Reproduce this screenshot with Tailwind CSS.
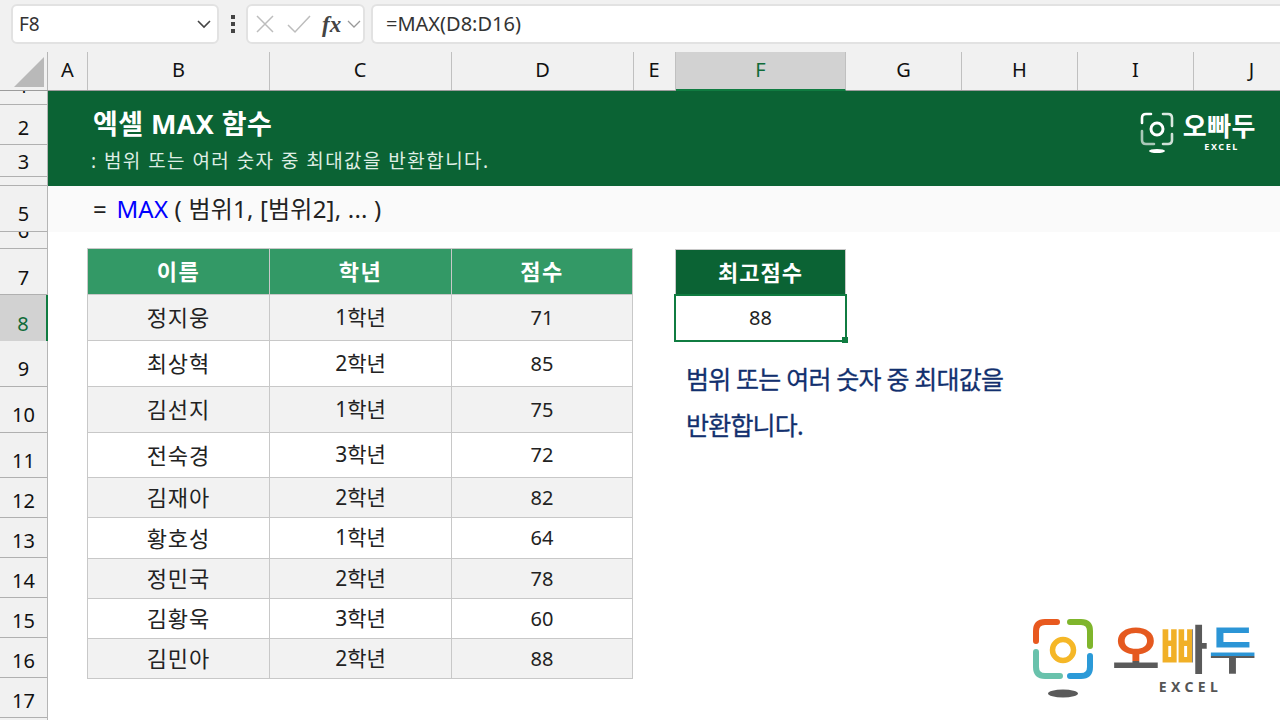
<!DOCTYPE html>
<html lang="ko">
<head>
  <meta charset="UTF-8" />
  <title>엑셀 MAX 함수</title>
  <script src="https://cdn.jsdelivr.net/npm/@tailwindcss/browser@4"></script>
</head>
<body class="bg-white overflow-hidden font-['Noto_Sans','Noto_Sans_CJK_KR',sans-serif]">
<div class="relative w-[1280px] h-[720px] overflow-hidden flex flex-col">

  <!-- Formula bar -->
  <div class="h-[52px] shrink-0 bg-[#f1f1f1] flex items-start pt-[4px] pl-[11px]">
    <div class="w-[208px] h-[40px] shrink-0 bg-white border-2 border-[#e2e2e2] rounded-[6px] flex items-center justify-between pl-[6px] pr-[5px] text-[19px] text-[#333]">
      <span>F8</span>
      <svg width="16" height="10" viewBox="0 0 16 10" fill="none" stroke="#444" stroke-width="1.6"><path d="M2 2l6 6 6-6"/></svg>
    </div>
    <div class="w-[27px] h-[40px] shrink-0 flex flex-col items-center justify-center gap-[3px]">
      <i class="block w-[4px] h-[4px] bg-[#444]"></i>
      <i class="block w-[4px] h-[4px] bg-[#444]"></i>
      <i class="block w-[4px] h-[4px] bg-[#444]"></i>
    </div>
    <div class="w-[119px] h-[40px] bg-white border-2 border-[#e2e2e2] rounded-[6px] flex items-center pl-[7px] shrink-0">
      <svg width="20" height="20" viewBox="0 0 20 20" fill="none" stroke="#bdbdbd" stroke-width="1.5"><path d="M2 2l16 16M18 2L2 18"/></svg>
      <svg class="ml-[12px]" width="24" height="20" viewBox="0 0 24 20" fill="none" stroke="#bdbdbd" stroke-width="1.5"><path d="M1 11l7 7L23 2"/></svg>
      <span class="ml-[11px] text-[23px] leading-none font-bold italic text-[#444] font-['Liberation_Serif',serif]">fx</span>
      <svg class="ml-[6px]" width="14" height="8" viewBox="0 0 14 8" fill="none" stroke="#999" stroke-width="1.3"><path d="M1 1l6 6 6-6"/></svg>
    </div>
    <div class="ml-[6px] flex-1 h-[40px] bg-white border-2 border-r-0 border-[#e2e2e2] rounded-l-[6px] flex items-center pl-[13px] text-[20px] text-[#333]">=MAX(D8:D16)</div>
  </div>

  <!-- Column headers -->
  <div class="h-[39px] shrink-0 bg-[#f1f1f1] flex text-[20px] text-[#111] border-b border-[#9c9c9c]">
    <div class="w-[48px] shrink-0 border-r border-[#b5b5b5] flex items-start pt-[5px] pl-[14px]">
      <svg width="30" height="30" viewBox="0 0 30 30"><path d="M30 0V30H0z" fill="#b9b9b9"/></svg>
    </div>
    <div class="w-[40px] shrink-0 border-r border-[#c0c0c0] flex items-center justify-center pb-[2px]">A</div>
    <div class="w-[182px] shrink-0 border-r border-[#c0c0c0] flex items-center justify-center pb-[2px]">B</div>
    <div class="w-[182px] shrink-0 border-r border-[#c0c0c0] flex items-center justify-center pb-[2px] pr-[1px]">C</div>
    <div class="w-[182px] shrink-0 border-r border-[#c0c0c0] flex items-center justify-center pb-[2px]">D</div>
    <div class="w-[42px] shrink-0 border-r border-[#c0c0c0] flex items-center justify-center pb-[2px] pr-[1px]">E</div>
    <div class="w-[170px] shrink-0 bg-[#d2d2d2] border-b-2 border-[#107c41] -mb-px border-r border-r-[#c0c0c0] flex items-center justify-center pb-[1px] text-[#0f6b38]">F</div>
    <div class="w-[116px] shrink-0 border-r border-[#c0c0c0] flex items-center justify-center pb-[2px]">G</div>
    <div class="w-[116px] shrink-0 border-r border-[#c0c0c0] flex items-center justify-center pb-[2px]">H</div>
    <div class="w-[116px] shrink-0 border-r border-[#c0c0c0] flex items-center justify-center pb-[2px]">I</div>
    <div class="w-[116px] shrink-0 border-r border-[#c0c0c0] flex items-center justify-center pb-[2px]">J</div>
  </div>

  <div class="flex flex-1 min-h-0">
    <!-- Row headers -->
    <div class="w-[48px] shrink-0 bg-[#f1f1f1] border-r border-[#b5b5b5] text-[20px] leading-[24px] text-[#111] flex flex-col">
      <div class="h-[14px] shrink-0 overflow-hidden border-b border-[#b0b0b0] flex items-end justify-center pb-[6px]"><span class="leading-[24px]">1</span></div>
      <div class="h-[40px] shrink-0 overflow-hidden border-b border-[#b0b0b0] flex items-end justify-center pb-[4px]">2</div>
      <div class="h-[32px] shrink-0 overflow-hidden border-b border-[#b0b0b0] flex items-end justify-center pb-[2px]">3</div>
      <div class="h-[9px] shrink-0 overflow-hidden border-b border-[#b0b0b0]"></div>
      <div class="h-[46px] shrink-0 overflow-hidden border-b border-[#b0b0b0] flex items-end justify-center pb-[5px]">5</div>
      <div class="h-[17px] shrink-0 overflow-hidden border-b border-[#b0b0b0] flex items-end justify-center pb-[5px]"><span class="leading-[24px]">6</span></div>
      <div class="h-[46px] shrink-0 overflow-hidden border-b border-[#b0b0b0] flex items-end justify-center pb-[4px]">7</div>
      <div class="h-[46px] shrink-0 overflow-hidden bg-[#d2d2d2] border-r-2 -mr-px border-[#107c41] flex items-end justify-center pb-[5px] text-[#0f6b38]">8</div>
      <div class="h-[46px] shrink-0 overflow-hidden border-b border-[#b0b0b0] flex items-end justify-center pb-[5px]">9</div>
      <div class="h-[46px] shrink-0 overflow-hidden border-b border-[#b0b0b0] flex items-end justify-center pb-[5px]">10</div>
      <div class="h-[45px] shrink-0 overflow-hidden border-b border-[#b0b0b0] flex items-end justify-center pb-[4px]">11</div>
      <div class="h-[40px] shrink-0 overflow-hidden border-b border-[#b0b0b0] flex items-end justify-center pb-[4px]">12</div>
      <div class="h-[40px] shrink-0 overflow-hidden border-b border-[#b0b0b0] flex items-end justify-center pb-[4px]">13</div>
      <div class="h-[40px] shrink-0 overflow-hidden border-b border-[#b0b0b0] flex items-end justify-center pb-[4px]">14</div>
      <div class="h-[40px] shrink-0 overflow-hidden border-b border-[#b0b0b0] flex items-end justify-center pb-[4px]">15</div>
      <div class="h-[40px] shrink-0 overflow-hidden border-b border-[#b0b0b0] flex items-end justify-center pb-[4px]">16</div>
      <div class="h-[40px] shrink-0 overflow-hidden border-b border-[#b0b0b0] flex items-end justify-center pb-[4px]">17</div>
    </div>

    <!-- Sheet -->
    <div class="flex-1 min-w-0 flex flex-col">
      <!-- Banner -->
      <div class="h-[95px] shrink-0 bg-[#0b6334] flex justify-between pl-[45px] pr-[24px]">
        <div class="text-white">
          <div class="mt-[15px] text-[27px] leading-[36px] font-bold tracking-[0.4px]">엑셀 MAX 함수</div>
          <div class="-ml-[2px] mt-[6px] text-[19px] leading-[26px] text-[#dfeee4] tracking-[1.45px]">: 범위 또는 여러 숫자 중 최대값을 반환합니다.</div>
        </div>
        <div class="flex gap-[9px] pt-[21px]">
          <svg width="34" height="44" viewBox="0 0 34 44" fill="none" stroke="#fff" stroke-width="2.6" stroke-linecap="round">
            <path d="M2 11V6q0-4 4-4h5"/>
            <path d="M23 2h5q4 0 4 4v8" opacity=".85"/>
            <path d="M2 19v9q0 4 4 4h8" opacity=".65"/>
            <path d="M32 22v6q0 4-4 4h-5" opacity=".8"/>
            <circle cx="17" cy="17" r="6" stroke-width="3"/>
            <ellipse cx="17" cy="39" rx="8" ry="2" fill="#fff" stroke="none"/>
          </svg>
          <div class="flex flex-col items-center">
            <span class="text-[26px] leading-[28px] font-bold tracking-[0.5px] text-white">오빠두</span>
            <span class="self-end mr-[17px] mt-[2px] text-[9px] leading-[10px] font-bold tracking-[1.6px] text-white">EXCEL</span>
          </div>
        </div>
      </div>

      <!-- Syntax row -->
      <div class="h-[46px] shrink-0 bg-[#fafafa] pl-[45px] flex items-center text-[24px] tracking-[0.2px] text-[#222] whitespace-pre">= <span class="ml-[3px] text-[#0000ff]">MAX</span> ( 범위1, [범위2], ... )</div>

      <div class="flex pt-[16px] pl-[39px]">
        <!-- Data table -->
        <table class="w-[546px] table-fixed border-collapse text-[20px] text-center text-[#222] shrink-0">
          <thead>
            <tr class="h-[46px] bg-[#339966] text-white text-[22px] tracking-[1.5px]">
              <th class="w-[182px] border border-[#c8c8c8] font-semibold">이름</th><th class="w-[182px] border border-[#c8c8c8] font-semibold">학년</th><th class="border border-[#c8c8c8] font-semibold">점수</th>
            </tr>
          </thead>
          <tbody>
            <tr class="h-[46px] bg-[#f2f2f2]"><td class="border border-[#c8c8c8] text-[22px] tracking-[1px]">정지웅</td><td class="border border-[#c8c8c8] text-[21px]">1학년</td><td class="border border-[#c8c8c8]">71</td></tr>
            <tr class="h-[46px]"><td class="border border-[#c8c8c8] text-[22px] tracking-[1px]">최상혁</td><td class="border border-[#c8c8c8] text-[21px]">2학년</td><td class="border border-[#c8c8c8]">85</td></tr>
            <tr class="h-[46px] bg-[#f2f2f2]"><td class="border border-[#c8c8c8] text-[22px] tracking-[1px]">김선지</td><td class="border border-[#c8c8c8] text-[21px]">1학년</td><td class="border border-[#c8c8c8]">75</td></tr>
            <tr class="h-[45px]"><td class="border border-[#c8c8c8] text-[22px] tracking-[1px]">전숙경</td><td class="border border-[#c8c8c8] text-[21px]">3학년</td><td class="border border-[#c8c8c8]">72</td></tr>
            <tr class="h-[40px] bg-[#f2f2f2]"><td class="border border-[#c8c8c8] text-[22px] tracking-[1px]">김재아</td><td class="border border-[#c8c8c8] text-[21px]">2학년</td><td class="border border-[#c8c8c8]">82</td></tr>
            <tr class="h-[41px]"><td class="border border-[#c8c8c8] text-[22px] tracking-[1px]">황호성</td><td class="border border-[#c8c8c8] text-[21px]">1학년</td><td class="border border-[#c8c8c8]">64</td></tr>
            <tr class="h-[40px] bg-[#f2f2f2]"><td class="border border-[#c8c8c8] text-[22px] tracking-[1px]">정민국</td><td class="border border-[#c8c8c8] text-[21px]">2학년</td><td class="border border-[#c8c8c8]">78</td></tr>
            <tr class="h-[40px]"><td class="border border-[#c8c8c8] text-[22px] tracking-[1px]">김황욱</td><td class="border border-[#c8c8c8] text-[21px]">3학년</td><td class="border border-[#c8c8c8]">60</td></tr>
            <tr class="h-[40px] bg-[#f2f2f2]"><td class="border border-[#c8c8c8] text-[22px] tracking-[1px]">김민아</td><td class="border border-[#c8c8c8] text-[21px]">2학년</td><td class="border border-[#c8c8c8]">88</td></tr>
          </tbody>
        </table>

        <!-- Result -->
        <div class="ml-[42px] mt-[1px] w-[171px] shrink-0">
          <div class="h-[45px] bg-[#0b6334] border border-[#c8c8c8] border-b-0 flex items-center justify-center text-[22px] tracking-[1px] font-semibold text-white">최고점수</div>
          <div class="relative h-[48px] -mx-px border-2 border-[#107c41] bg-white flex items-center justify-center text-[20px] text-[#222]">88
            <i class="absolute block -right-[3px] -bottom-[3px] w-[6px] h-[6px] bg-[#107c41]"></i>
          </div>
          <div class="mt-[14px] ml-[11px] w-[340px] text-[25px] leading-[46px] tracking-[-0.8px] text-[#12306e] [-webkit-text-stroke:0.3px_#12306e]">범위 또는 여러 숫자 중 최대값을<br />반환합니다.</div>
        </div>
      </div>
    </div>
  </div>

  <!-- Watermark logo -->
  <div class="absolute left-[1033px] top-[619px] flex gap-[19px]">
    <svg width="60" height="80" viewBox="0 0 60 80" fill="none" stroke-width="6" stroke-linecap="round">
      <path d="M3 22V12q0-9 9-9h12" stroke="#e8591f"/>
      <path d="M37 3h11q9 0 9 9v15" stroke="#7fb52c"/>
      <path d="M3 33v15q0 9 9 9h15" stroke="#69c2ac"/>
      <path d="M57 37v11q0 9-9 9H37" stroke="#2b9ad8"/>
      <circle cx="30" cy="31" r="10.5" stroke="#f5b727" stroke-width="5.5"/>
      <ellipse cx="30" cy="74.5" rx="15" ry="4" fill="#5a5a5a"/>
    </svg>
    <div class="flex flex-col pt-[2px]">
      <div class="text-[52px] leading-[56px] font-bold tracking-[0.5px] flex">
        <span class="text-transparent bg-clip-text bg-[linear-gradient(180deg,#e5591f_72%,#5a5a5a_72%)]">오</span>
        <span class="text-transparent bg-clip-text bg-[linear-gradient(90deg,#f1b027_66%,#5a5a5a_66%)]">빠</span>
        <span class="text-transparent bg-clip-text bg-[linear-gradient(180deg,#2b95d6_62%,#5a5a5a_62%)]">두</span>
      </div>
      <span class="self-center ml-[12px] mt-[2px] text-[14px] leading-[16px] font-bold tracking-[4.4px] text-[#555]">EXCEL</span>
    </div>
  </div>
</div>
</body>
</html>
